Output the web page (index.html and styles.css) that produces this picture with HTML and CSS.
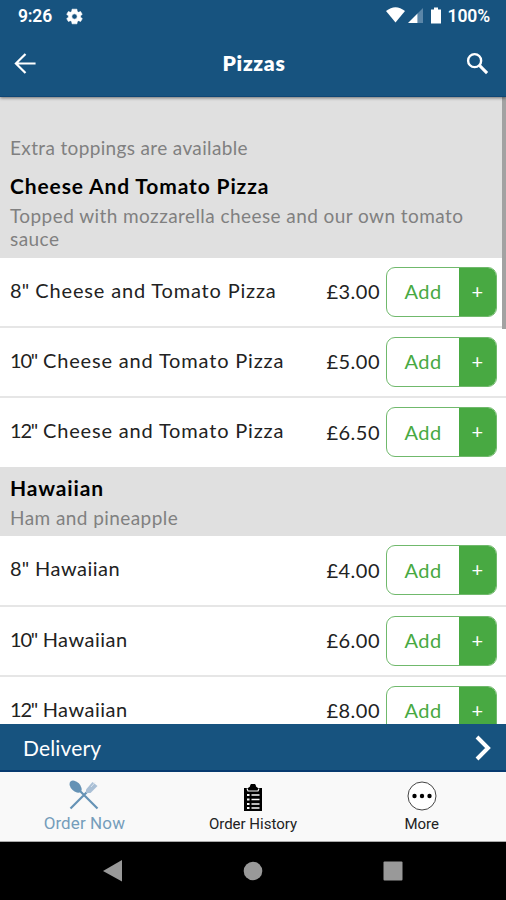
FILE: index.html
```html
<!DOCTYPE html>
<html lang="en">
<head>
<meta charset="utf-8">
<title>Pizzas</title>
<link rel="stylesheet" href="styles.css">
</head>
<body>
<div class="phone">
  <header class="top">
    <div class="status">
      <span class="clock">9:26</span>
      <svg class="gear" viewBox="1.500 2 21 20"><path fill="#fff" stroke="#fff" stroke-width=".8" fill-rule="evenodd" d="M19.400 13a7.500 7.500 0 0 0 0-2l2.100-1.600-2-3.500-2.500 1a7.500 7.500 0 0 0-1.700-1L15 3H9l-.4 2.900a7.500 7.500 0 0 0-1.700 1l-2.500-1-2 3.500L4.600 11a7.500 7.500 0 0 0 0 2l-2.200 1.600 2 3.500 2.500-1a7.500 7.500 0 0 0 1.700 1L9 21h6l.4-2.900a7.500 7.500 0 0 0 1.700-1l2.500 1 2-3.500zM12 15.300a3.300 3.300 0 1 1 0-6.600 3.300 3.300 0 0 1 0 6.600z"/></svg>
      <svg class="signals" viewBox="0 0 56 18"><path fill="#fff" d="M0 4Q9.500-3.600 19 4L9.500 15.500z"/><path fill="#5b86a8" d="M31.500 6.500 37 1v15h-5.500z"/><path fill="#fff" d="M22 16 31.500 6.500V16z"/><path fill="#fff" d="M48 .5h4v2h3v14H45v-14h3z"/></svg>
      <span class="percent">100%</span>
    </div>
    <div class="title-bar">
      <svg class="back" viewBox="0 0 24 24"><path d="M22.500 12H3M12 2 2 12 12 22" fill="none" stroke="#fff" stroke-width="2.300"/></svg>
      <h1>Pizzas</h1>
      <svg class="search" viewBox="0 0 24 24"><circle cx="9" cy="9" r="6.800" fill="none" stroke="#fff" stroke-width="2.500"/><path d="m14 14 8 8" stroke="#fff" stroke-width="3.200"/></svg>
    </div>
  </header>
  <main class="menu">
    <div class="scrollbar"></div>
    <section class="group first">
      <p class="note">Extra toppings are available</p>
      <h2>Cheese And Tomato Pizza</h2>
      <p class="desc">Topped with mozzarella cheese and our own tomato<br>sauce</p>
    </section>
    <div class="item"><span class="name wide"><span class="size">8"</span> Cheese and Tomato Pizza</span><span class="price">£3.00</span><div class="add"><span>Add</span><b>+</b></div></div>
    <div class="item"><span class="name wide"><span class="size two">10"</span> Cheese and Tomato Pizza</span><span class="price">£5.00</span><div class="add"><span>Add</span><b>+</b></div></div>
    <div class="item last"><span class="name wide"><span class="size two">12"</span> Cheese and Tomato Pizza</span><span class="price">£6.50</span><div class="add"><span>Add</span><b>+</b></div></div>
    <section class="group second">
      <h2>Hawaiian</h2>
      <p class="desc">Ham and pineapple</p>
    </section>
    <div class="item"><span class="name"><span class="size">8"</span> Hawaiian</span><span class="price">£4.00</span><div class="add"><span>Add</span><b>+</b></div></div>
    <div class="item"><span class="name"><span class="size two">10"</span> Hawaiian</span><span class="price">£6.00</span><div class="add"><span>Add</span><b>+</b></div></div>
    <div class="item"><span class="name"><span class="size two">12"</span> Hawaiian</span><span class="price">£8.00</span><div class="add"><span>Add</span><b>+</b></div></div>
  </main>
  <div class="delivery">
    <span>Delivery</span>
    <svg viewBox="0 0 16 26"><path d="m2 2 11 11L2 24" fill="none" stroke="#fff" stroke-width="4"/></svg>
  </div>
  <nav class="tabs">
    <div class="tab active">
      <svg class="cutlery" viewBox="0 0 30 30"><path d="M9.500 9.500 28.500 28.500M1.500 28.500 19 11" stroke="#6592b5" fill="none" stroke-width="2.200"/><ellipse cx="6.600" cy="6.600" rx="4.600" ry="7.200" transform="rotate(-45 6.600 6.600)" fill="#6592b5"/><path d="M17 13V9.500L23.500 2l5 4-7 7z" fill="#a9bfd5"/><path d="m22 7 4-4.500" stroke="#dbe4ef" stroke-width="1"/></svg>
      <span>Order Now</span>
    </div>
    <div class="tab history">
      <svg class="clipboard" viewBox="0 0 18 27"><path fill="#000" d="M0 4h4l2-1.500a3 3 0 0 1 6 0L14 4h4v23H0z"/><path d="M3 4.500 4 7h10l1-2.500" fill="none" stroke="#f9f9f9" stroke-width="1.200"/><path d="M3 11h2.500M3 15.500h2.500M3 20h2.500M3 24h2.500" stroke="#f9f9f9" stroke-width="2.200"/><path d="M7.500 11h8M7.500 15.500h8M7.500 20h8M7.500 24h8" stroke="#f9f9f9" stroke-width="1.300"/></svg>
      <span>Order History</span>
    </div>
    <div class="tab more">
      <svg class="dots" viewBox="0 0 30 30"><circle cx="15" cy="15" r="14" fill="#fff" stroke="#444"/><circle cx="7.500" cy="15" r="2.200"/><circle cx="15" cy="15" r="2.200"/><circle cx="22.500" cy="15" r="2.200"/></svg>
      <span>More</span>
    </div>
  </nav>
  <footer class="system">
    <svg viewBox="0 0 20 22"><path fill="#999" d="M19 0v21.500L0 11z"/></svg>
    <svg viewBox="0 0 20 22"><circle cx="10" cy="11" r="9.300" fill="#999"/></svg>
    <svg viewBox="0 0 20 22"><rect x=".5" y="1.500" width="19" height="19" rx="1" fill="#999"/></svg>
  </footer>
</div>
</body>
</html>
```
FILE: styles.css
```css
* { box-sizing: border-box; }
body { margin: 0; font-family: Lato, "Liberation Sans", sans-serif; }
h1, h2, p { margin: 0; }
svg { display: block; flex: none; }
.phone { width: 506px; height: 900px; display: flex; flex-direction: column; overflow: hidden; background: #fff; }
.top { height: 97px; flex: none; background: #17537f; color: #fff; border-bottom: 1px solid #0f4675; box-shadow: 0 1px 3px rgba(0,0,0,.5); z-index: 1; }
.status { height: 31px; display: flex; align-items: center; padding: 1px 16px 0 18px; font: 600 17.500px Roboto, sans-serif; }
.clock { width: 48px; letter-spacing: -.2px; }
.percent { letter-spacing: -.1px; }
.gear { width: 17px; height: 17px; }
.signals { width: 56px; height: 18px; margin-left: auto; margin-right: 5px; }
.title-bar { height: 65px; display: flex; align-items: center; justify-content: space-between; padding: 0 17px 0 14px; }
.title-bar h1 { font-size: 21px; font-weight: 800; letter-spacing: .7px; margin: -2px 0 0 5px; }
.back { width: 23px; height: 23px; }
.search { width: 23px; height: 23px; }
.menu { position: relative; height: 626.500px; flex: none; overflow: hidden; }
.scrollbar { position: absolute; right: 0; top: 0; width: 4px; height: 232px; background: #a2a2a2; }
.group { background: #e0e0e0; padding: 0 10px; }
.first { height: 160.500px; padding-top: 39px; }
.second { height: 69.500px; padding-top: 8px; }
.note, .desc { font-size: 19px; line-height: 23px; color: #808080; letter-spacing: .43px; }
.note { margin-bottom: 14px; letter-spacing: .35px; }
h2 { font-size: 21px; line-height: 25px; font-weight: 700; color: #000; letter-spacing: .87px; }
.desc { margin-top: 6px; }
.item { height: 70.200px; display: flex; align-items: center; padding: 0 9px 0 10px; border-bottom: 2px solid #e6e6e6; color: #222; font-size: 20px; letter-spacing: .5px; }
.last { border-bottom: 0; height: 69px; }
.name { flex: 1; margin-top: -4px; }
.wide { letter-spacing: .83px; }
.size { letter-spacing: .2px; }
.two { letter-spacing: -1.200px; }
.price { margin: -1px 6px 0 0; }
.add { width: 111px; height: 50px; border: 1.500px solid #70b96c; border-radius: 9px; display: flex; overflow: hidden; color: #48a942; }
.add span { flex: 1; display: grid; place-items: center; padding-bottom: 1px; }
.add b { width: 37px; background: #48a942; color: #fff; display: grid; place-items: center; font-weight: 400; padding-bottom: 2px; }
.delivery { height: 48.500px; flex: none; display: flex; align-items: center; justify-content: space-between; padding: 2px 15px 0 23px; background: #17537f; color: #fff; font-size: 21px; letter-spacing: .15px; border-bottom: 2px solid #073a70; }
.delivery svg { width: 16px; height: 26px; }
.tabs { height: 70px; flex: none; background: #f9f9f9; display: grid; grid-template-columns: repeat(3, 1fr); border-bottom: 1px solid #aaa; color: #222; font: 15px Roboto, sans-serif; }
.tab { display: flex; flex-direction: column; align-items: center; }
.active { color: #759dbb; font-size: 17px; letter-spacing: .1px; padding-top: 8px; gap: 3px; }
.cutlery { width: 30px; height: 30px; }
.history { padding-top: 12px; gap: 4px; }
.clipboard { width: 18px; height: 27px; }
.more { padding-top: 9px; gap: 4px; }
.dots { width: 30px; height: 30px; }
.system { flex: 1; background: #000; display: flex; justify-content: space-between; align-items: center; padding: 0 103px; }
.system svg { width: 20px; height: 22px; }
```
